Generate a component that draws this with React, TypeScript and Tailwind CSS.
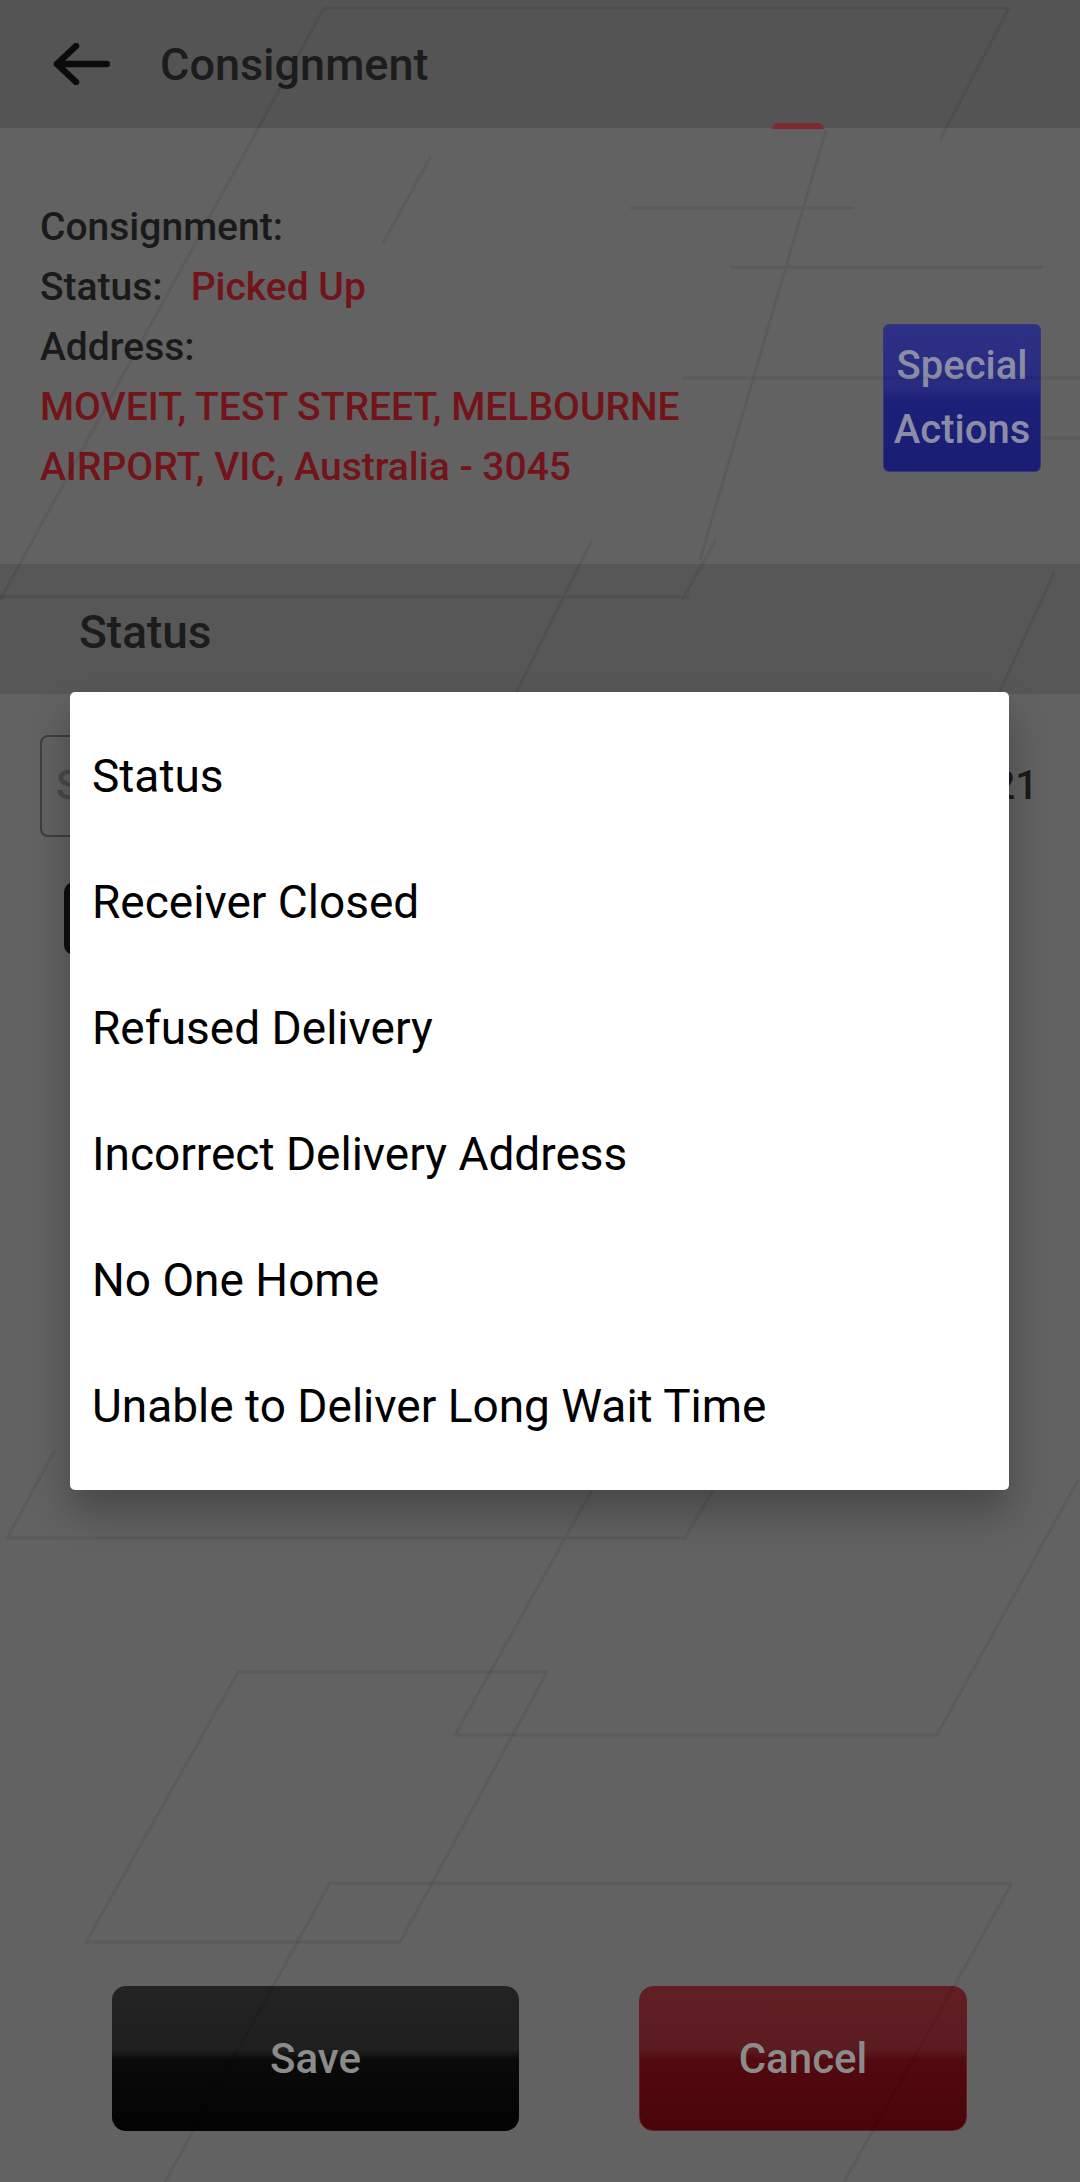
import React from "react"

const options = [
  "Status",
  "Receiver Closed",
  "Refused Delivery",
  "Incorrect Delivery Address",
  "No One Home",
  "Unable to Deliver Long Wait Time",
]

function BackgroundLines() {
  // faint parallelogram pattern drawn behind the dimmed screen
  return (
    <svg
      className="pointer-events-none absolute inset-0"
      width="1080"
      height="2182"
      viewBox="0 0 1080 2182"
      fill="none"
      stroke="rgba(0,0,0,0.07)"
      strokeWidth="3"
    >
      <path d="M324 8 L1009 8 M324 8 L0 600 M1009 8 L940 140" />
      <path d="M826 130 L700 560 M630 208 L854 208 M730 267 L1043 267 M431 156 L383 243" />
      <path d="M682 378 L1080 378 M1043 438 L1080 438" />
      <path d="M0 597 L689 597 M592 540 L516 693 M716 540 L682 600 M1054 573 L999 693" />
      <path d="M55 1450 L7 1538 L685 1538 L713 1490 M592 1490 L455 1735 L937 1735 L1078 1480" />
      <path d="M238 1672 L547 1672 L400 1942 L86 1942 Z" />
      <path d="M1012 1883 L330 1883 L165 2182 M1012 1883 L844 2182" />
    </svg>
  )
}

export default function App() {
  return (
    <div className="relative w-[1080px] h-[2182px] overflow-hidden bg-[#626262] font-['Roboto',sans-serif] flex flex-col">
      {/* Header */}
      <div className="h-[128px] shrink-0 bg-[#545454] flex items-center">
        <svg className="ml-[52px]" width="58" height="42" viewBox="0 0 58 42" fill="none">
          <path d="M5 21 L55 21 M24 3 L5 21 L24 39" stroke="#0b0b0b" strokeWidth="6.5" strokeLinecap="round" strokeLinejoin="round" />
        </svg>
        <span className="ml-[50px] text-[45px] font-medium text-[#1c1c1c] leading-none">Consignment</span>
      </div>

      {/* Consignment info */}
      <div className="h-[436px] shrink-0 flex items-start justify-between pl-[40px] pr-[39px] pt-[69px]">
        <div className="text-[39px] leading-[60px] font-medium text-[#1a1a1a]">
          <div>Consignment:</div>
          <div>
            Status:<span className="ml-[28px] text-[#721419]">Picked Up</span>
          </div>
          <div>Address:</div>
          <div className="text-[#721419]">
            MOVEIT, TEST STREET, MELBOURNE
            <br />
            AIRPORT, VIC, Australia - 3045
          </div>
        </div>
        <button className="mt-[127px] w-[158px] h-[148px] rounded-[6px] border border-[#34377c] bg-[linear-gradient(180deg,#2d3084_0%,#282b80_42%,#1d2078_52%,#1a1d74_100%)] text-[40px] font-medium leading-[64px] text-[#8c8ca6] flex flex-col items-center justify-center">
          <span>Special</span>
          <span>Actions</span>
        </button>
      </div>

      {/* Status bar */}
      <div className="h-[130px] shrink-0 bg-[#575757] flex items-center pl-[79px] pt-[6px]">
        <span className="text-[46px] font-medium text-[#1c1c1c] leading-none">Status</span>
      </div>

      {/* Form behind the dialog */}
      <div className="flex items-center justify-between pl-[40px] pr-[42px] mt-[41px]">
        <div className="w-[520px] h-[102px] rounded-[8px] border-2 border-[#3e3e3e] flex items-center pl-[14px] text-[40px] font-medium text-[#4a4a4a]">
          S
        </div>
        <span className="text-[40px] font-medium text-[#1a1a1a]">2021</span>
      </div>
      <div className="ml-[64px] mt-[45px] w-[400px] h-[73px] rounded-[10px] bg-[#0e0e0e]" />

      {/* Bottom buttons */}
      <div className="mt-auto mb-[51px] flex pl-[112px] gap-[120px]">
        <button className="w-[407px] h-[145px] rounded-[14px] bg-[linear-gradient(180deg,#232323_0%,#1f1f1f_44%,#0a0a0a_51%,#030303_100%)] text-[42px] font-medium text-[#8b8b8b]">
          Save
        </button>
        <button className="w-[328px] h-[145px] rounded-[14px] border border-[#6a1c22] bg-[linear-gradient(180deg,#611f24_0%,#5b1b20_44%,#52090f_51%,#4a050a_100%)] text-[42px] font-medium text-[#8b8b8b]">
          Cancel
        </button>
      </div>

      <BackgroundLines />

      {/* red tab peeking under the header */}
      <div className="absolute left-[772px] top-[123px] w-[52px] h-[6px] rounded-t-full bg-[#7d2a31]" />

      {/* Options dialog */}
      <div className="absolute left-[70px] top-[692px] w-[939px] py-[21px] bg-white rounded-[5px] shadow-[0_22px_40px_rgba(0,0,0,0.28)]">
        {options.map((o) => (
          <div key={o} className="h-[126px] flex items-center pl-[22px]">
            <span className="text-[46px] leading-none text-black">{o}</span>
          </div>
        ))}
      </div>
    </div>
  )
}
